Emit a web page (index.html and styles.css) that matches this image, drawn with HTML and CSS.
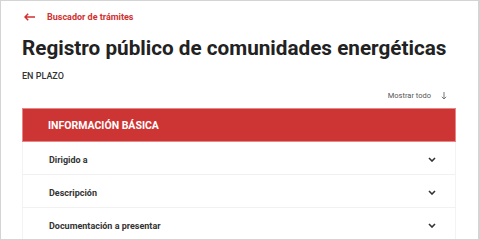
FILE: index.html
```html
<!DOCTYPE html>
<html lang="es">
<head>
<meta charset="utf-8">
<link rel="stylesheet" href="styles.css">
</head>
<body>
<div class="frame">
  <div class="page">
    <a class="back" href="#"><svg class="back-arrow" viewBox="0 0 11 8" width="11" height="8"><path d="M1 4 H11 M4.2 0.8 L1 4 L4.2 7.2" fill="none" stroke="#d1302f" stroke-width="1.5"/></svg><span>Buscador de trámites</span></a>
    <h1 class="title">Registro público de comunidades energéticas</h1>
    <div class="status">EN PLAZO</div>
    <div class="toolbar"><span class="show-all">Mostrar todo</span><svg class="down" viewBox="0 0 6 8" width="6" height="8"><path d="M3 0 V7 M0.8 4.8 L3 7 L5.2 4.8" fill="none" stroke="#777" stroke-width="1"/></svg></div>
    <section class="panel">
      <div class="panel-head">INFORMACIÓN BÁSICA</div>
      <div class="row"><span>Dirigido a</span><svg class="chev" viewBox="0 0 8 5" width="8" height="5"><path d="M1 1 L4 4 L7 1" fill="none" stroke="#333" stroke-width="1.6"/></svg></div>
      <div class="row"><span>Descripción</span><svg class="chev" viewBox="0 0 8 5" width="8" height="5"><path d="M1 1 L4 4 L7 1" fill="none" stroke="#333" stroke-width="1.6"/></svg></div>
      <div class="row"><span>Documentación a presentar</span><svg class="chev" viewBox="0 0 8 5" width="8" height="5"><path d="M1 1 L4 4 L7 1" fill="none" stroke="#333" stroke-width="1.6"/></svg></div>
    </section>
  </div>
</div>
</body>
</html>
```
FILE: styles.css
```css
html, body { margin: 0; padding: 0; background: #fff; }
body { font-family: Roboto, "Liberation Sans", sans-serif; color: #222; }
.frame {
  width: 480px; height: 240px; box-sizing: border-box;
  border: 1px solid #d4d4d4; border-right-width: 2px;
  overflow: hidden;
}
.page { padding: 9px 0 0 21px; width: 434px; }
.back {
  display: flex; align-items: center; gap: 12px;
  color: #d1302f; text-decoration: none;
  font-size: 9px; font-weight: 700; line-height: 14px;
}
.back-arrow { display: block; margin-left: 2px; }
.title {
  margin: 11px 0 0; font-size: 20.7px; font-weight: 700; line-height: 26px;
  color: #222; white-space: nowrap;
}
.status {
  margin-top: 9px; font-size: 9px; font-weight: 500; color: #333; line-height: 12px;
}
.toolbar {
  display: flex; justify-content: flex-end; align-items: center;
  gap: 10px; margin-top: 8px; padding-right: 9px;
  font-size: 7.5px; color: #555; line-height: 12px;
}
.down { display: block; }
.panel { margin-top: 6px; }
.panel-head {
  height: 34px; box-sizing: border-box;
  background: #cd3434; border: 1px solid #e78686;
  color: #fff; font-weight: 700; font-size: 10.5px;
  display: flex; align-items: center; padding-left: 25px;
}
.row {
  height: 33px; box-sizing: border-box;
  display: flex; align-items: center; justify-content: space-between;
  padding: 3px 19px 0 26px;
  border-left: 1px solid #f3f3f3; border-right: 1px solid #f3f3f3;
  border-bottom: 1px solid #f1f1f1;
  font-size: 9px; font-weight: 700; color: #333;
}
.chev { display: block; }
```
